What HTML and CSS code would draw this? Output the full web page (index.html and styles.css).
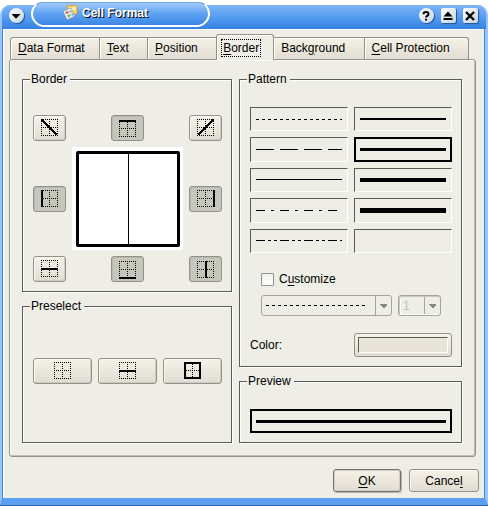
FILE: index.html
```html
<!DOCTYPE html>
<html lang="en">
<head>
<meta charset="utf-8">
<title>Cell Format</title>
<link rel="stylesheet" href="styles.css">
</head>
<body>
<svg class="defs" width="0" height="0" aria-hidden="true">
  <symbol id="grid" viewBox="0 0 18 18">
    <path d="M0 .5H17M0 8.500H17M0 16.500H17M.5 0V17M8.500 0V17M16.500 0V17" fill="none" stroke="#000" stroke-dasharray="1 1"/>
  </symbol>
  <symbol id="arrow" viewBox="0 0 7 4"><path d="M0 0H7V1L4 4H3L0 1Z" fill="#888882"/></symbol>
</svg>
<main class="dialog">
  <header class="titlebar">
    <button class="win round" aria-label="Window menu"><svg width="14" height="14"><path d="M2.500 5H11.500L7 9.800Z"/></svg></button>
    <h1 class="title">
      <svg width="16" height="16" viewBox="0 0 16 16">
        <path d="M5 1 15 0V9L6 11Z" fill="#ffd35c" stroke="#c98a28" stroke-width=".6"/>
        <path d="M6.500 2.500 14 1.800V5L7 6Z" fill="#ffedac"/>
        <path d="M1 6 9 3 13 11 5 15Z" fill="#f1f3f3" stroke="#7d8da8" stroke-width=".7"/>
        <path d="M3 7 6 6 7 8 4 9Z" fill="#d76565"/><path d="M7 6 9 5 10 7 8 8Z" fill="#8dbf74"/>
        <path d="M5 10 8 9 9 11 6 13Z" fill="#84b96d"/><path d="M9 9 11 8 12 10 10 11Z" fill="#89a9d5"/>
      </svg>
      <span>Cell Format</span>
    </h1>
    <div class="controls">
      <button class="win round" aria-label="Help"><svg width="14" height="14"><path d="M4.500 5.200C4.500 2.400 9.500 2.400 9.500 5.200 9.500 6.800 7 6.800 7 8.500M7 9.800V11.500" fill="none" stroke="#000" stroke-width="2"/></svg></button>
      <button class="win" aria-label="Shade"><svg width="14" height="14"><path d="M7 2.500 11.500 7.500H2.500ZM2.500 9H11.500V11H2.500Z"/></svg></button>
      <button class="win" aria-label="Close"><svg width="14" height="14"><path d="M3 3 11 11M11 3 3 11" stroke="#000" stroke-width="2.400"/></svg></button>
    </div>
  </header>
  <div class="body">
    <div class="tabs" role="tablist">
      <button class="tab" role="tab"><u>D</u>ata Format</button>
      <button class="tab" role="tab"><u>T</u>ext</button>
      <button class="tab" role="tab"><u>P</u>osition</button>
      <button class="tab active" role="tab" aria-selected="true"><span><u>B</u>order</span></button>
      <button class="tab" role="tab">Back<u>g</u>round</button>
      <button class="tab" role="tab"><u>C</u>ell Protection</button>
    </div>
    <section class="panel" role="tabpanel">
      <div class="column">
        <fieldset class="group borders">
          <legend>Border</legend>
          <div class="border-grid">
            <button class="tool" aria-label="Falling diagonal"><svg width="18" height="18"><use href="#grid"/><path d="M1 1 16 16" stroke="#000" stroke-width="2"/></svg></button>
            <button class="tool on" aria-label="Top border" aria-pressed="true"><svg width="18" height="18"><use href="#grid"/><path d="M0 0H17V2H0Z"/></svg></button>
            <button class="tool" aria-label="Rising diagonal"><svg width="18" height="18"><use href="#grid"/><path d="M16 1 1 16" stroke="#000" stroke-width="2"/></svg></button>
            <button class="tool on" aria-label="Left border" aria-pressed="true"><svg width="18" height="18"><use href="#grid"/><path d="M0 0H2V17H0Z"/></svg></button>
            <div class="canvas"><div class="cells"></div></div>
            <button class="tool on" aria-label="Right border" aria-pressed="true"><svg width="18" height="18"><use href="#grid"/><path d="M16 0H18V17H16Z"/></svg></button>
            <button class="tool" aria-label="Horizontal border"><svg width="18" height="18"><use href="#grid"/><path d="M0 8H17V10H0Z"/></svg></button>
            <button class="tool on" aria-label="Bottom border" aria-pressed="true"><svg width="18" height="18"><use href="#grid"/><path d="M0 16H17V18H0Z"/></svg></button>
            <button class="tool on" aria-label="Vertical border" aria-pressed="true"><svg width="18" height="18"><use href="#grid"/><path d="M8 0H10V17H8Z"/></svg></button>
          </div>
        </fieldset>
        <fieldset class="group preselect">
          <legend>Preselect</legend>
          <div class="presets">
            <button class="tool" aria-label="No border"><svg width="18" height="18"><use href="#grid"/></svg></button>
            <button class="tool" aria-label="Horizontal only"><svg width="18" height="18"><use href="#grid"/><path d="M0 8H17V10H0Z"/></svg></button>
            <button class="tool" aria-label="Outline"><svg width="18" height="18"><use href="#grid"/><path d="M1 1H16V16H1Z" fill="none" stroke="#000" stroke-width="2"/></svg></button>
          </div>
        </fieldset>
      </div>
      <div class="column">
        <fieldset class="group pattern">
          <legend>Pattern</legend>
          <div class="patterns">
            <button class="line" aria-label="Dotted"><svg><path d="M0 .5H86" stroke-dasharray="3 3"/></svg></button>
            <button class="line" aria-label="Solid 2"><i class="w2"></i></button>
            <button class="line" aria-label="Dashed"><svg><path d="M0 .5H86" stroke-dasharray="18 6"/></svg></button>
            <button class="line selected" aria-label="Solid 3" aria-pressed="true"><i class="w3"></i></button>
            <button class="line" aria-label="Solid 1"><i class="w1"></i></button>
            <button class="line" aria-label="Solid 4"><i class="w4"></i></button>
            <button class="line" aria-label="Dash dot"><svg><path d="M0 .5H86" stroke-dasharray="9 6 3 6"/></svg></button>
            <button class="line" aria-label="Solid 5"><i class="w5"></i></button>
            <button class="line" aria-label="Dash dot dot"><svg><path d="M0 .5H86" stroke-dasharray="9 3 3 3 3 3"/></svg></button>
            <button class="line" aria-label="None"></button>
          </div>
          <div class="custom">
            <label class="check"><input type="checkbox"><span>C<u>u</u>stomize</span></label>
            <div class="selects">
              <div class="combo style">
                <select aria-label="Line style" disabled><option></option></select>
                <svg class="dash"><path d="M0 .5H99" stroke-dasharray="3 3"/></svg>
                <svg class="arrow" width="7" height="4"><use href="#arrow"/></svg>
              </div>
              <div class="combo size">
                <select aria-label="Line width" disabled><option>1</option></select>
                <svg class="arrow" width="7" height="4"><use href="#arrow"/></svg>
              </div>
            </div>
          </div>
          <div class="color-row">
            <label for="color">Color:</label>
            <button id="color" class="color"><span></span></button>
          </div>
        </fieldset>
        <fieldset class="group preview">
          <legend>Preview</legend>
          <div class="line selected"><i class="w3"></i></div>
        </fieldset>
      </div>
    </section>
    <footer class="actions">
      <button class="push default"><u>O</u>K</button>
      <button class="push">Cance<u>l</u></button>
    </footer>
  </div>
</main>
</body>
</html>
```

FILE: styles.css
```css
* { box-sizing: border-box; }
body {
  margin: 0;
  background: #fff;
  color: #000;
  font: 12px/16px "Liberation Sans", Arial, sans-serif;
}
button, select, input { font: inherit; color: inherit; margin: 0; padding: 0; }
svg { display: block; shape-rendering: crispEdges; }
u { text-underline-offset: 2px; text-decoration-thickness: 1px; }
.defs { position: absolute; }

.dialog {
  display: flex;
  flex-direction: column;
  min-height: 100vh;
  border-bottom: 1px solid #2c62a8;
}

/* Title bar */
.titlebar {
  position: relative;
  z-index: 0;
  display: flex;
  align-items: flex-start;
  height: 29px;
  padding: 2px 10px 0 9px;
}
.titlebar::before {
  content: "";
  position: absolute;
  z-index: -1;
  inset: 5px 0 0;
  border: solid #9ac4f7;
  border-width: 0 2px 0 2px;
  border-radius: 10px 10px 0 0;
  background: linear-gradient(#7fb5f7, #559cf0 50%, #3582e2);
}
.title {
  display: flex;
  align-items: center;
  gap: 4px;
  width: 179px;
  height: 25px;
  margin: 0 0 0 7px;
  padding: 0 0 2px 29px;
  border: 2px solid #fff;
  border-top: 1px solid #70a6e6;
  border-radius: 12px 12px 14px 14px;
  background: linear-gradient(#a2cbfb, #62a5f3 45%, #3a86e5);
  color: #fff;
  font: bold 12px/16px "Liberation Sans", Arial, sans-serif;
  text-shadow: 1px 1px #000;
}
.title svg { shape-rendering: auto; }
.controls { display: flex; gap: 7px; margin-left: auto; }
.win {
  width: 15px;
  height: 15px;
  margin-top: 6px;
  border: 0;
  border-radius: 2px;
  background: linear-gradient(135deg, #fff, #c5d2df);
  box-shadow: 1px 1px 1px #20569b;
}
.win.round { border-radius: 50%; }
.win svg { shape-rendering: auto; }

/* Window frame */
.body {
  flex: 1;
  padding: 5px 9px 6px 7px;
  border: solid #9ac4f7;
  border-width: 0 3px 7px 2px;
  border-bottom-color: #5a9ff0;
  background: #eeede6;
  box-shadow: inset 1px 0 #3d86df, inset -1px 0 #3d86df, inset 2px 1px #fff;
}

/* Tabs */
.tabs { display: flex; align-items: flex-end; height: 25px; padding: 0 7px 0 1px; }
.tab {
  flex: 1 1 auto;
  height: 22px;
  padding: 0 14px 2px 7px;
  border: solid #92918c;
  border-width: 1px 1px 0 0;
  background: linear-gradient(#f4f1e6, #e2ddd2);
  box-shadow: inset 1px 1px #fffdf6;
  text-align: left;
  white-space: nowrap;
}
.tab:first-child { flex-grow: 0; border-left-width: 1px; border-top-left-radius: 3px; }
.tab:last-child { border-top-right-radius: 3px; }
.tab.active {
  position: relative;
  z-index: 1;
  flex-grow: 0;
  height: 26px;
  margin: 0 0 -1px -1px;
  padding: 0 12px 0 4px;
  border-left-width: 1px;
  border-radius: 3px 3px 0 0;
  background: #eeede6;
}
.tab.active span { display: block; padding: 0 1px; border: 1px dotted #000; }

/* Tab page */
.panel {
  display: grid;
  grid-template-columns: 210fr 223fr;
  gap: 7px;
  padding: 11px 13px 13px 12px;
  border: 1px solid #92918c;
  border-radius: 3px;
  box-shadow: inset 1px 1px #fbfaf5, inset -1px -1px #bfbeb8;
}
.column { display: flex; flex-direction: column; gap: 6px; min-width: 0; }
.group {
  min-width: 0;
  margin: 0;
  padding: 0 9px 9px 10px;
  border: 1px solid #5b5b57;
  box-shadow: inset 1px 1px #fff, 1px 1px #fff;
}
.group legend { margin-left: -3px; padding: 0 3px 0 1px; background: #eeede6; }

.tool {
  display: grid;
  place-items: center;
  height: 26px;
  border: 1px solid #92918c;
  border-radius: 3px;
  background: linear-gradient(#f6f2e8, #e1dcd2);
  box-shadow: inset 1px 1px #fbf8ef, inset -1px -1px #cfcbc2;
}
.tool.on { background: #c7c6bb; box-shadow: inset 1px 1px #b9b8ae; padding: 1px 0 0 1px; }

.borders .border-grid {
  display: grid;
  grid-template-columns: 33px 1fr 33px;
  gap: 6px;
  align-items: center;
  padding-top: 28px;
}
.border-grid > .on:nth-child(3n + 2) { width: 33px; justify-self: center; }
.canvas { height: 103px; padding: 4px 3px 3px 4px; background: #fff; }
.cells {
  height: 96px;
  border: 3px solid #000;
  border-radius: 2px;
  background: linear-gradient(#000, #000) center / 1px 100% no-repeat;
}

.preselect { flex: 1; }
.presets { display: grid; grid-template-columns: repeat(3, 1fr); gap: 6px; padding-top: 44px; }

/* Line patterns */
.patterns {
  display: grid;
  grid-template-columns: 1fr 1fr;
  grid-template-rows: repeat(5, 1fr);
  gap: 6px;
  height: 166px;
  padding-top: 20px;
}
.line {
  display: flex;
  align-items: center;
  padding: 0 5px;
  border: 1px solid #fff;
  border-top-color: #5b5b57;
  border-left-color: #5b5b57;
  background: transparent;
}
.line svg { width: 100%; height: 1px; }
.line path, .dash path { fill: none; stroke: #000; }
.line i { flex: 1; background: #000; }
.line.selected { padding: 0 4px; border: 2px solid #000; }
.w1 { height: 1px; }
.w2 { height: 2px; }
.w3 { height: 3px; }
.w4 { height: 4px; }
.w5 { height: 5px; }

.custom { padding: 18px 11px 0; }
.check { display: flex; align-items: center; gap: 5px; }
.check input {
  appearance: none;
  width: 13px;
  height: 13px;
  border: 1px solid #92918c;
  border-radius: 1px;
  background: linear-gradient(#f0f0ee, #fff);
}
.selects { display: grid; grid-template-columns: 131fr 43fr; gap: 6px; margin-top: 8px; }
.combo { display: grid; align-items: center; }
.combo > * { grid-area: 1 / 1; }
.combo select {
  appearance: none;
  width: 100%;
  height: 21px;
  padding: 0 4px;
  border: 1px solid #a4a39d;
  border-radius: 3px;
  background: linear-gradient(#a4a39d, #a4a39d) right 15px top / 1px 100% no-repeat #eeede6;
  color: #c2c1bb;
  opacity: 1;
}
.combo.size select { box-shadow: inset 1px 1px #c8c7c1, inset 2px -1px #fff; }
.combo .arrow { justify-self: end; margin-right: 5px; pointer-events: none; }
.combo .dash { width: 99px; height: 1px; margin-left: 5px; pointer-events: none; }

.color-row {
  display: grid;
  grid-template-columns: 1fr 1fr;
  gap: 6px;
  align-items: center;
  padding-top: 17px;
}
.color {
  height: 24px;
  padding: 3px;
  border: 1px solid #92918c;
  border-radius: 3px;
  background: linear-gradient(#f6f2e8, #e1dcd2);
}
.color span {
  display: block;
  height: 16px;
  border: 1px solid #fff;
  border-top-color: #5b5b57;
  border-left-color: #5b5b57;
  background: #e8e4da;
}

.preview .line { height: 24px; margin-top: 20px; }

/* Dialog buttons */
.actions { display: flex; justify-content: flex-end; gap: 8px; padding-top: 12px; margin-right: -3px; }
.push {
  width: 70px;
  height: 23px;
  border: 1px solid #92918c;
  border-radius: 3px;
  background: linear-gradient(#f6f2e8, #e1dcd2);
  box-shadow: inset 1px 1px #fbf8ef;
}
.push.default { width: 68px; border-color: #73736e; box-shadow: inset 0 0 0 1px #d2cec4, 1px 1px #b5b4ae; }
```
